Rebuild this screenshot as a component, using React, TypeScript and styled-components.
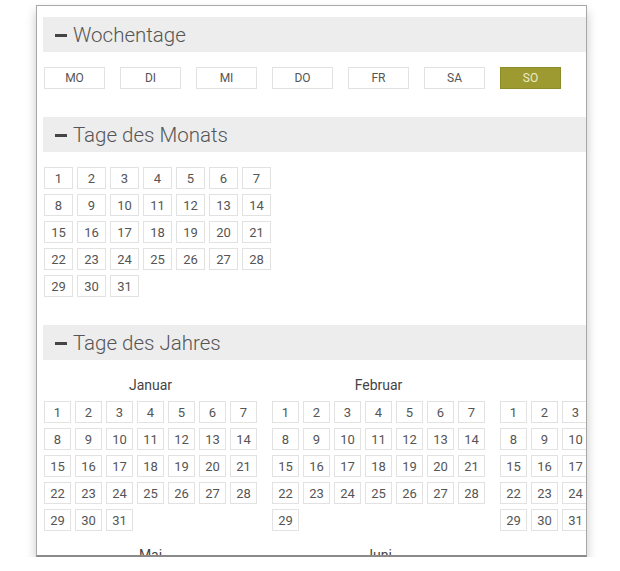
import styled, { createGlobalStyle } from "styled-components";

const GlobalStyle = createGlobalStyle`
  html, body {
    margin: 0;
    padding: 0;
    background: #ffffff;
    font-family: Roboto, "Liberation Sans", Arial, sans-serif;
  }
`;

const Page = styled.div`
  padding: 5px 0 0 36px;
`;

const Frame = styled.div`
  width: 551px;
  height: 552px;
  box-sizing: border-box;
  border: 1px solid #a8a8a8;
  border-bottom: 2px solid #8a8a8a;
  background: #fff;
  overflow: hidden;
  box-shadow: 0 6px 10px rgba(0, 0, 0, 0.22);
`;

const Content = styled.div`
  padding: 11px 0 0 7px;
`;

const Header = styled.div<{ $top: number }>`
  display: flex;
  align-items: center;
  gap: 6px;
  height: 35px;
  margin: ${(p) => p.$top}px 0 0 -1px;
  padding-left: 12px;
  background: #ededed;
  color: #555;
  font-size: 20.5px;
  font-weight: 300;
  white-space: nowrap;
`;

const Minus = styled.span`
  display: inline-block;
  width: 12px;
  height: 3px;
  background: #444;
  margin-top: 1px;
`;

const WeekRow = styled.div`
  display: flex;
  gap: 15px;
  margin-top: 15px;
`;

const WeekButton = styled.div<{ $active?: boolean }>`
  width: 61px;
  height: 22px;
  box-sizing: border-box;
  display: flex;
  align-items: center;
  justify-content: center;
  border: 1px solid ${(p) => (p.$active ? "#8e8c28" : "#e2e2e2")};
  background: ${(p) => (p.$active ? "#9c9a30" : "#fff")};
  color: ${(p) => (p.$active ? "#ecebc4" : "#555")};
  font-size: 12px;
`;

const DayGrid = styled.div<{ $cell: number; $top?: number }>`
  display: grid;
  grid-template-columns: repeat(7, ${(p) => p.$cell}px);
  grid-auto-rows: 22px;
  column-gap: 4px;
  row-gap: 5px;
  margin-top: ${(p) => p.$top ?? 0}px;
`;

const Day = styled.div`
  box-sizing: border-box;
  display: flex;
  align-items: center;
  justify-content: center;
  border: 1px solid #e2e2e2;
  color: #555;
  font-size: 13px;
`;

const YearGrid = styled.div`
  display: grid;
  grid-template-columns: repeat(4, 213px);
  column-gap: 15px;
  row-gap: 16px;
  margin-top: 17px;
`;

const Month = styled.div`
  display: flex;
  flex-direction: column;
`;

const MonthTitle = styled.div`
  height: 16px;
  line-height: 16px;
  text-align: center;
  color: #444;
  font-size: 14px;
  margin-bottom: 8px;
`;

const weekdays = ["MO", "DI", "MI", "DO", "FR", "SA", "SO"];
const months: [string, number][] = [
  ["Januar", 31],
  ["Februar", 29],
  ["März", 31],
  ["April", 30],
  ["Mai", 31],
  ["Juni", 30],
  ["Juli", 31],
  ["August", 31],
];

const range = (n: number) => Array.from({ length: n }, (_, i) => i + 1);

export default function App() {
  return (
    <>
      <GlobalStyle />
      <Page>
        <Frame>
          <Content>
            <Header $top={0}>
              <Minus />
              Wochentage
            </Header>
            <WeekRow>
              {weekdays.map((d) => (
                <WeekButton key={d} $active={d === "SO"}>
                  {d}
                </WeekButton>
              ))}
            </WeekRow>

            <Header $top={28}>
              <Minus />
              Tage des Monats
            </Header>
            <DayGrid $cell={29} $top={15}>
              {range(31).map((n) => (
                <Day key={n}>{n}</Day>
              ))}
            </DayGrid>

            <Header $top={28}>
              <Minus />
              Tage des Jahres
            </Header>
            <YearGrid>
              {months.map(([name, days]) => (
                <Month key={name}>
                  <MonthTitle>{name}</MonthTitle>
                  <DayGrid $cell={27}>
                    {range(days).map((n) => (
                      <Day key={n}>{n}</Day>
                    ))}
                  </DayGrid>
                </Month>
              ))}
            </YearGrid>
          </Content>
        </Frame>
      </Page>
    </>
  );
}
